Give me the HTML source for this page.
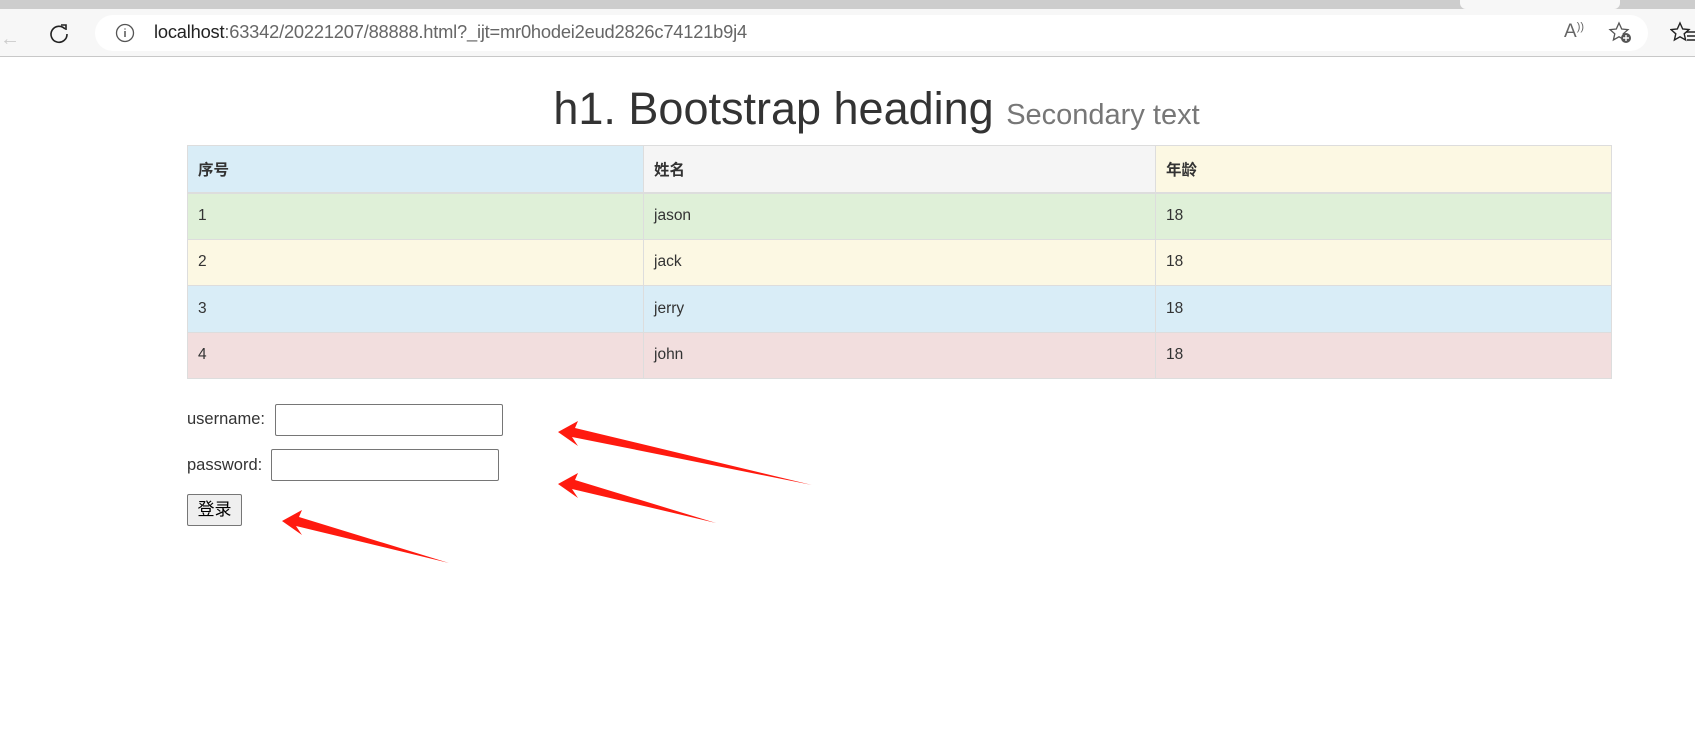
<!DOCTYPE html>
<html><head><meta charset="utf-8"><style>
*{box-sizing:border-box;margin:0;padding:0}
body{width:1695px;height:748px;position:relative;overflow:hidden;background:#fff;font-family:"Liberation Sans","Noto Sans CJK SC",sans-serif;color:#333}
.a{position:absolute}
table{position:absolute;left:187px;top:145px;width:1425px;border-collapse:collapse;font-size:15.5px}
td,th{border:1px solid #ddd;padding:0 10px;text-align:left;height:46.5px}
th{height:47px;border-bottom:2px solid #ddd;font-weight:bold}
input{position:absolute;border:1px solid #767676;border-radius:2px;background:#fff}
</style></head><body>
<div class="a" style="left:0;top:0;width:1695px;height:9px;background:#cdcdcd"></div>
<div class="a" style="left:1460px;top:0;width:160px;height:9px;background:#f7f7f7;border-radius:0 0 6px 6px"></div>
<div class="a" style="left:0;top:9px;width:1695px;height:48px;background:#f7f7f7;border-bottom:1px solid #c8c8c8"></div>
<div class="a" style="left:0;top:28px;font-size:20px;color:#ccc">←</div>
<svg class="a" style="left:48px;top:22px" width="22" height="22" viewBox="0 0 22 22"><path d="M17 7A8 8 0 1 0 19 12" fill="none" stroke="#222" stroke-width="1.6"/><path d="M13 3l5 0 0 5" fill="none" stroke="#222" stroke-width="1.6"/></svg>
<div class="a" style="left:95px;top:15px;width:1553px;height:36px;background:#fff;border-radius:18px"></div>
<svg class="a" style="left:115px;top:23px" width="20" height="20" viewBox="0 0 20 20"><circle cx="10" cy="10" r="8.5" fill="none" stroke="#555" stroke-width="1.3"/><path d="M10 8v6M10 5.5v1" stroke="#555" stroke-width="1.5"/></svg>
<div class="a" style="left:154px;top:21px;font-size:18.3px;color:#222;letter-spacing:-0.2px">localhost<span style="color:#666">:63342/20221207/88888.html?_ijt=mr0hodei2eud2826c74121b9j4</span></div>
<div class="a" style="left:1564px;top:21px;font-size:19px;color:#666">A<span style="font-size:11px;vertical-align:top">))</span></div>
<svg class="a" style="left:1608px;top:21px" width="26" height="24" viewBox="0 0 26 24"><path d="M11 2l2.7 6 6.3.6-4.8 4.2 1.4 6.2L11 15.8 5.4 19 6.8 12.8 2 8.6l6.3-.6z" fill="none" stroke="#555" stroke-width="1.3"/><circle cx="18" cy="17" r="5" fill="#555"/><path d="M18 14v6M15 17h6" stroke="#fff" stroke-width="1.4"/></svg>
<svg class="a" style="left:1670px;top:21px" width="25" height="24" viewBox="0 0 25 24"><path d="M10 2l2.7 6 6.3.6-4.8 4.2 1.4 6.2L10 15.8 4.4 19 5.8 12.8 1 8.6l6.3-.6z" fill="none" stroke="#222" stroke-width="1.4"/><path d="M16 11h9M17 15h8M17 19h8" stroke="#222" stroke-width="1.4"/></svg>

<div class="a" style="left:29px;width:1695px;top:83px;text-align:center;font-size:45px;line-height:52px;color:#333">h1. Bootstrap heading <span style="font-size:29px;color:#777">Secondary text</span></div>

<table>
<tr><th style="background:#d9edf7;width:456px">序号</th><th style="background:#f5f5f5;width:512px">姓名</th><th style="background:#fcf8e3">年龄</th></tr>
<tr style="background:#dff0d8"><td>1</td><td>jason</td><td>18</td></tr>
<tr style="background:#fcf8e3"><td>2</td><td>jack</td><td>18</td></tr>
<tr style="background:#d9edf7"><td>3</td><td>jerry</td><td>18</td></tr>
<tr style="background:#f2dede"><td>4</td><td>john</td><td>18</td></tr>
</table>

<div class="a" style="left:187px;top:410px;font-size:16.5px">username:</div>
<input style="left:275px;top:404px;width:228px;height:32px">
<div class="a" style="left:187px;top:456px;font-size:16.5px">password:</div>
<input style="left:271px;top:449px;width:228px;height:32px">
<div class="a" style="left:187px;top:494px;width:55px;height:32px;border:1px solid #767676;border-radius:2px;background:#efefef;font-size:17px;text-align:center;line-height:30px;color:#000">登录</div>

<svg class="a" style="left:0;top:0" width="1695" height="748">
<g fill="#ff1a0f">
<polygon points="558,432 578,421 575,428 812,485 572,437 578,446"/>
<polygon points="558,484 578,473 575,480 716,523 572,489 578,498"/>
<polygon points="282,521 302,510 299,517 449,563 296,526 302,535"/>
</g></svg>
</body></html>
